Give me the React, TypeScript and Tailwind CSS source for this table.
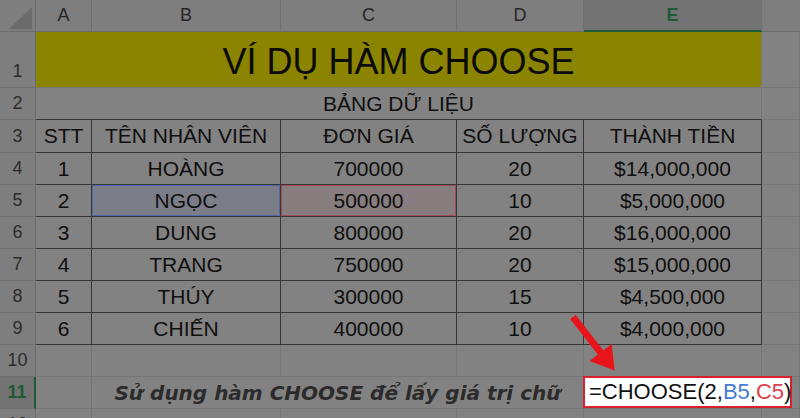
import React from "react";

const employees = [
  { row: "4", stt: "1", name: "HOÀNG", price: "700000", qty: "20", total: "$14,000,000" },
  { row: "5", stt: "2", name: "NGỌC", price: "500000", qty: "10", total: "$5,000,000" },
  { row: "6", stt: "3", name: "DUNG", price: "800000", qty: "20", total: "$16,000,000" },
  { row: "7", stt: "4", name: "TRANG", price: "750000", qty: "20", total: "$15,000,000" },
  { row: "8", stt: "5", name: "THÚY", price: "300000", qty: "15", total: "$4,500,000" },
  { row: "9", stt: "6", name: "CHIẾN", price: "400000", qty: "10", total: "$4,000,000" },
];

const ColHead = ({ label, active = false }: { label: string; active?: boolean }) => (
  <div
    className={`flex items-center justify-center border-r border-[#707070] text-[18px] ${
      active
        ? "bg-[#737373] border-b-2 border-b-[#1d5a35] font-bold text-[#1d5a35]"
        : "bg-[#7e7e7e] border-b border-b-[#6c6c6c] text-[#262626]"
    }`}
  >
    {label}
  </div>
);

// row numbers sit at the bottom of their row, like Excel
const RowHead = ({ label, active = false }: { label: string; active?: boolean }) => (
  <div
    className={`flex items-end justify-center pb-[7px] leading-none border-b border-[#707070] text-[18px] ${
      active
        ? "bg-[#737373] border-r-2 border-r-[#1d5a35] font-bold text-[#1d5a35]"
        : "bg-[#7e7e7e] border-r border-r-[#6c6c6c] text-[#2c2c2c]"
    }`}
  >
    {label}
  </div>
);

// plain sheet cell with light gridlines
const Blank = () => <div className="border-r border-b border-[#777676]" />;

// bordered table cell
const Td = ({ children, extra = "" }: { children?: React.ReactNode; extra?: string }) => (
  <div
    className={`flex items-center justify-center border-r border-b border-[#363636] text-[21px] text-[#0f0f0f] ${extra}`}
  >
    {children}
  </div>
);

export default function App() {
  return (
    <div className="relative w-[800px] h-[418px] overflow-hidden bg-[#838282] font-['Liberation_Sans',Arial,sans-serif]">
      <div className="grid grid-cols-[36px_56px_189px_176px_127px_178px_38px] grid-rows-[32px_56px_32px_33px_repeat(9,32px)]">
        {/* column headers */}
        <div className="relative bg-[#7e7e7e] border-r border-b border-[#6c6c6c]">
          <svg className="absolute inset-0" width="36" height="32" viewBox="0 0 36 32">
            <polygon points="9,29 32,7 32,29" fill="#6b6b6b" />
          </svg>
        </div>
        <ColHead label="A" />
        <ColHead label="B" />
        <ColHead label="C" />
        <ColHead label="D" />
        <ColHead label="E" active />
        <div className="bg-[#7e7e7e] border-b border-[#6c6c6c]" />

        {/* row 1 title */}
        <RowHead label="1" />
        <div className="col-span-5 flex items-end justify-center pb-[7px] bg-[#8b8400] border-r border-b border-[#777676] text-[36px] leading-none text-[#0b0b0b]">
          VÍ DỤ HÀM CHOOSE
        </div>
        <Blank />

        {/* row 2 */}
        <RowHead label="2" />
        <div className="col-span-5 flex items-center justify-center border-r border-r-[#777676] border-b border-b-[#363636] text-[21px] text-[#0f0f0f]">
          BẢNG DỮ LIỆU
        </div>
        <Blank />

        {/* row 3 headings */}
        <RowHead label="3" />
        <Td>STT</Td>
        <Td>TÊN NHÂN VIÊN</Td>
        <Td>ĐƠN GIÁ</Td>
        <Td>SỐ LƯỢNG</Td>
        <Td>THÀNH TIỀN</Td>
        <Blank />

        {employees.map((e) => (
          <React.Fragment key={e.row}>
            <RowHead label={e.row} />
            <Td>{e.stt}</Td>
            <Td extra={e.row === "5" ? "bg-[#7b7e89] shadow-[inset_0_0_0_1px_#5069a8]" : ""}>{e.name}</Td>
            <Td extra={e.row === "5" ? "bg-[#877d7e] shadow-[inset_0_0_0_1px_#a44c58]" : ""}>{e.price}</Td>
            <Td>{e.qty}</Td>
            <Td>{e.total}</Td>
            <Blank />
          </React.Fragment>
        ))}

        {/* row 10 */}
        <RowHead label="10" />
        <Blank />
        <Blank />
        <Blank />
        <Blank />
        <Blank />
        <Blank />

        {/* row 11 */}
        <RowHead label="11" active />
        <Blank />
        <div className="col-span-3 flex items-center justify-center border-r border-b border-[#777676] font-['DejaVu_Sans',Verdana,sans-serif] text-[20px] font-bold italic text-[#2b2b2b]">
          Sử dụng hàm CHOOSE để lấy giá trị chữ
        </div>
        <Blank />
        <Blank />

        {/* row 12, mostly below the fold */}
        <RowHead label="12" />
        <Blank />
        <Blank />
        <Blank />
        <Blank />
        <Blank />
        <Blank />
      </div>

      {/* callout arrow */}
      <svg className="absolute inset-0 pointer-events-none" width="800" height="418" viewBox="0 0 800 418">
        <polygon
          points="575.8,314.9 603.4,350.4 611.6,343.9 614.7,370.6 589.6,361.1 597.8,354.6 570.2,319.1"
          fill="#e8141b"
        />
      </svg>

      {/* formula box */}
      <div className="absolute left-[583px] top-[376px] w-[209px] h-[32px] flex items-center pl-[4px] bg-white border-2 border-[#d6202a] text-[22px] leading-none text-[#111]">
        <span>=CHOOSE(2,</span>
        <span className="text-[#4a7bd0]">B5</span>
        <span>,</span>
        <span className="text-[#d8434c]">C5</span>
        <span>)</span>
      </div>
    </div>
  );
}
